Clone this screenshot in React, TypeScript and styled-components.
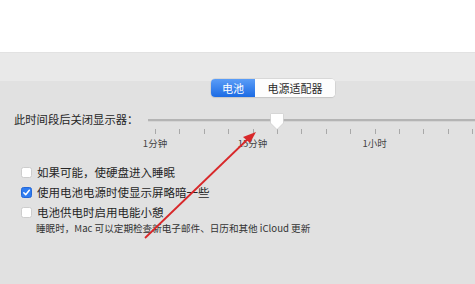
import styled, { createGlobalStyle } from "styled-components";

const GlobalStyle = createGlobalStyle`
  html, body {
    margin: 0;
    padding: 0;
    background: #e1e1e1;
    font-family: "Noto Sans CJK SC", "Noto Sans", sans-serif;
    color: #262626;
  }
`;

const Page = styled.div`
  position: relative;
  width: 475px;
  height: 284px;
  overflow: hidden;
  background: #e1e1e1;
`;

const TopBlank = styled.div`
  height: 52px;
  background: #ffffff;
`;

const Band = styled.div`
  height: 29px;
  box-sizing: border-box;
  padding: 21px 0 0 211px;
  background: #e9e9e9;
  border-top: 1px solid #e2e2e2;
`;

const Segmented = styled.div`
  display: inline-flex;
  height: 18px;
  border-radius: 4px;
  overflow: hidden;
  background: #fff;
  box-shadow: 0 0 0 0.5px #c8c8c8, 0 1px 1px rgba(0, 0, 0, 0.12);
`;

const Segment = styled.div<{ $active?: boolean; $w: number }>`
  width: ${(p) => p.$w}px;
  display: flex;
  align-items: center;
  justify-content: center;
  font-size: 11px;
  line-height: 18px;
  color: ${(p) => (p.$active ? "#fff" : "#2a2a2a")};
  background: ${(p) =>
    p.$active ? "linear-gradient(#5b9df7, #1c6be4)" : "#fdfdfd"};
`;

const Content = styled.div`
  padding: 30px 0 0 14px;
`;

const SliderRow = styled.div`
  display: flex;
  align-items: flex-start;
  height: 50px;
`;

const SliderLabel = styled.div`
  flex: none;
  width: 134px;
  font-size: 11.3px;
  line-height: 16px;
  white-space: nowrap;
`;

const Slider = styled.div`
  position: relative;
  flex: 1;
  min-width: 0;
`;

const Track = styled.div`
  margin-top: 8px;
  height: 2px;
  background: #b4b4b4;
  border-bottom: 1px solid #d4d4d4;
`;

const Ticks = styled.div`
  display: flex;
  gap: 23.4px;
  margin: 7px 0 0 7px;
  height: 5px;
`;

const Tick = styled.div`
  width: 1px;
  flex: none;
  height: 5px;
  background: #a8a8a8;
`;

const TickLabels = styled.div`
  display: grid;
  grid-template-columns: repeat(14, 24.4px);
  margin: 3px 0 0 -5.2px;
`;

const TickLabel = styled.div`
  display: flex;
  justify-content: center;
  white-space: nowrap;
  font-size: 9.5px;
  line-height: 12px;
  color: #444;
`;

const Thumb = styled.svg`
  position: absolute;
  left: 121px;
  top: 1px;
`;

const Options = styled.div`
  padding-top: 1px;
`;

const Option = styled.label`
  display: flex;
  align-items: center;
  height: 20px;
  padding-left: 7px;
  gap: 5px;
  font-size: 11.5px;
  white-space: nowrap;
`;

const Box = styled.span<{ $checked?: boolean }>`
  width: 11px;
  height: 11px;
  box-sizing: border-box;
  border-radius: 2.5px;
  display: flex;
  align-items: center;
  justify-content: center;
  background: ${(p) => (p.$checked ? "#2f7cf0" : "#fff")};
  border: 0.5px solid ${(p) => (p.$checked ? "#2468d8" : "#cdcdcd")};
`;

const Note = styled.div`
  padding-left: 22px;
  font-size: 9.6px;
  line-height: 13px;
  color: #333;
  white-space: nowrap;
`;

const Arrow = styled.svg`
  position: absolute;
  left: 0;
  top: 0;
  pointer-events: none;
`;

const labels: Record<number, string> = { 0: "1分钟", 4: "15分钟", 9: "1小时" };

const options = [
  { text: "如果可能，使硬盘进入睡眠", checked: false },
  { text: "使用电池电源时使显示屏略暗一些", checked: true },
  { text: "电池供电时启用电能小憩", checked: false },
];

export default function App() {
  return (
    <Page>
      <GlobalStyle />
      <TopBlank />
      <Band>
        <Segmented>
          <Segment $active $w={44}>电池</Segment>
          <Segment $w={80}>电源适配器</Segment>
        </Segmented>
      </Band>
      <Content>
        <SliderRow>
          <SliderLabel>此时间段后关闭显示器：</SliderLabel>
          <Slider>
            <Track />
            <Ticks>
              {Array.from({ length: 14 }).map((_, i) => (
                <Tick key={i} />
              ))}
            </Ticks>
            <TickLabels>
              {Array.from({ length: 14 }).map((_, i) => (
                <TickLabel key={i}>{labels[i] ?? ""}</TickLabel>
              ))}
            </TickLabels>
            <Thumb width="16" height="19" viewBox="0 0 16 19">
              <path
                d="M2.5 1.5 H13.5 Q14.5 1.5 14.5 2.5 V11 L8 17.5 L1.5 11 V2.5 Q1.5 1.5 2.5 1.5 Z"
                fill="#fff"
                stroke="#c4c4c4"
                strokeWidth="0.6"
              />
            </Thumb>
          </Slider>
        </SliderRow>
        <Options>
          {options.map((o) => (
            <Option key={o.text}>
              <Box $checked={o.checked}>
                {o.checked && (
                  <svg width="9" height="9" viewBox="0 0 9 9">
                    <path
                      d="M1.8 4.8 L3.7 6.7 L7.3 2.2"
                      fill="none"
                      stroke="#fff"
                      strokeWidth="1.5"
                      strokeLinecap="round"
                      strokeLinejoin="round"
                    />
                  </svg>
                )}
              </Box>
              {o.text}
            </Option>
          ))}
          <Note>睡眠时，Mac 可以定期检查新电子邮件、日历和其他 iCloud 更新</Note>
        </Options>
      </Content>
      <Arrow width="475" height="284" viewBox="0 0 475 284">
        <line x1="145" y1="238" x2="251" y2="136" stroke="#d8282a" strokeWidth="1.8" />
        <path d="M256 132 L243 137 L250 143 Z" fill="#d8282a" />
      </Arrow>
    </Page>
  );
}
